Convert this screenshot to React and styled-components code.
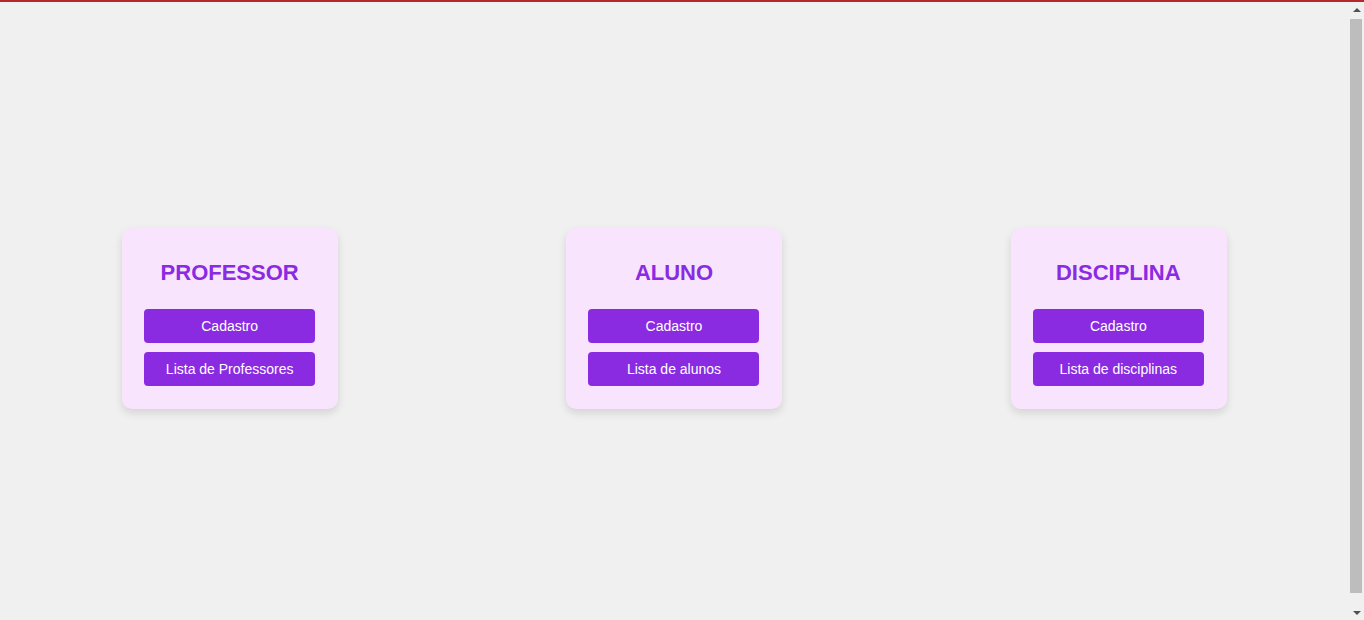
import React from "react";
import styled, { createGlobalStyle } from "styled-components";

const GlobalStyle = createGlobalStyle`
  body {
    margin: 8px 23px 8px 8px;
    background: #f0f0f0;
    font-family: "Liberation Sans", Arial, sans-serif;
  }
`;

const sections = [
  { title: "PROFESSOR", list: "Lista de Professores" },
  { title: "ALUNO", list: "Lista de alunos" },
  { title: "DISCIPLINA", list: "Lista de disciplinas" },
];

export default function App() {
  return (
    <>
      <GlobalStyle />
      <TopLine />
      <Page>
        {sections.map((s) => (
          <Card key={s.title}>
            <Title>{s.title}</Title>
            <Actions>
              <Button>Cadastro</Button>
              <Button>{s.list}</Button>
            </Actions>
          </Card>
        ))}
      </Page>
      <Scrollbar>
        <Arrow $dir="up" />
        <Track>
          <Thumb />
        </Track>
        <Arrow $dir="down" />
      </Scrollbar>
    </>
  );
}

const TopLine = styled.div`
  position: fixed;
  top: 0;
  left: 0;
  right: 0;
  height: 2px;
  background: #b8282a;
  z-index: 10;
`;

const Page = styled.div`
  height: 100vh;
  display: flex;
  justify-content: space-around;
  align-items: center;
`;

const Card = styled.div`
  width: 216px;
  box-sizing: border-box;
  padding: 31px 23px 23px 22px;
  background: #f8e4fc;
  border-radius: 10px;
  box-shadow: 0 4px 8px rgba(0, 0, 0, 0.12);
  display: flex;
  flex-direction: column;
  align-items: center;
`;

const Title = styled.h2`
  margin: 0 0 23px;
  font-size: 22px;
  line-height: 27px;
  font-weight: bold;
  color: #8a2be2;
`;

const Actions = styled.div`
  width: 100%;
  display: flex;
  flex-direction: column;
  gap: 9px;
`;

const Button = styled.button`
  height: 34px;
  border: none;
  border-radius: 4px;
  background: #8a2be2;
  color: #fff;
  font-family: "Liberation Sans", Arial, sans-serif;
  font-size: 14px;
  cursor: pointer;
`;

// browser scrollbar look-alike, sits over the right edge
const Scrollbar = styled.div`
  position: fixed;
  top: 2px;
  right: 0;
  bottom: 0;
  width: 15px;
  background: #f0f0f0;
  display: flex;
  flex-direction: column;
  z-index: 5;
`;

const Arrow = styled.div`
  height: 15px;
  display: flex;
  align-items: center;
  justify-content: center;

  &::after {
    content: "";
    width: 0;
    height: 0;
    border-left: 4px solid transparent;
    border-right: 4px solid transparent;
    ${(p) =>
      p.$dir === "up"
        ? "border-bottom: 4px solid #505050;"
        : "border-top: 4px solid #505050;"}
  }
`;

const Track = styled.div`
  flex: 1;
  padding: 2px 2px 0 1px;
  display: flex;
`;

const Thumb = styled.div`
  flex: 1;
  margin-bottom: 12px;
  background: #bdbdbd;
`;
